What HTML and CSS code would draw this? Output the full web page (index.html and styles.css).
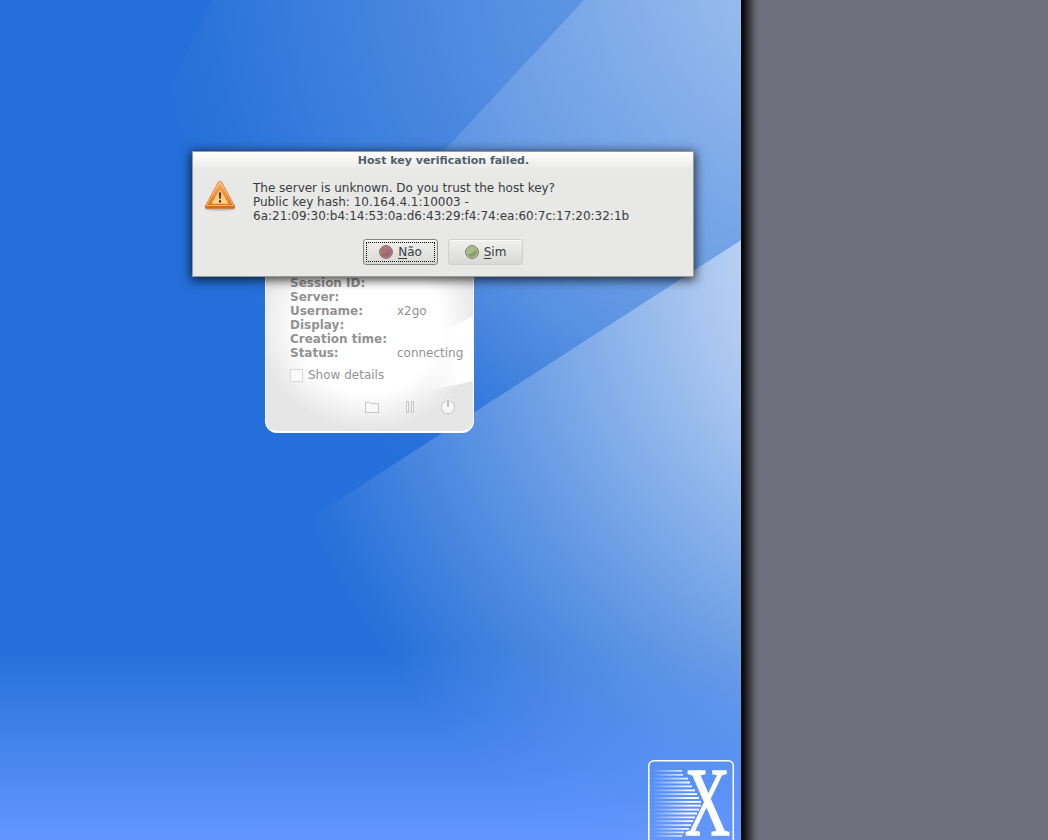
FILE: index.html
```html
<!DOCTYPE html>
<html lang="pt">
<head>
<meta charset="utf-8">
<title>X2Go Client</title>
<link rel="stylesheet" href="styles.css">
</head>
<body>
<div class="screen">
  <main class="desktop">
    <svg class="wallpaper" width="741" height="840" viewBox="0 0 741 840">
      <defs>
        <radialGradient id="beamTop" gradientUnits="userSpaceOnUse" cx="800" cy="-50" r="650">
          <stop offset="0" stop-color="#fff" stop-opacity=".38"/>
          <stop offset=".5" stop-color="#fff" stop-opacity=".21"/>
          <stop offset="1" stop-color="#fff" stop-opacity="0"/>
        </radialGradient>
        <radialGradient id="beamInner" gradientUnits="userSpaceOnUse" cx="900" cy="-50" r="640">
          <stop offset=".25" stop-color="#fff" stop-opacity=".28"/>
          <stop offset=".5" stop-color="#fff" stop-opacity=".19"/>
          <stop offset=".77" stop-color="#fff" stop-opacity=".12"/>
          <stop offset="1" stop-color="#fff" stop-opacity="0"/>
        </radialGradient>
        <radialGradient id="beamLow" gradientUnits="userSpaceOnUse" cx="960" cy="250" r="705">
          <stop offset=".31" stop-color="#fff" stop-opacity=".67"/>
          <stop offset=".55" stop-color="#fff" stop-opacity=".43"/>
          <stop offset=".7" stop-color="#fff" stop-opacity=".28"/>
          <stop offset="1" stop-color="#fff" stop-opacity="0"/>
        </radialGradient>
        <linearGradient id="floor" x1="0" y1="0" x2="0" y2="1">
          <stop offset="0" stop-color="#6497ff" stop-opacity="0"/>
          <stop offset="1" stop-color="#6497ff"/>
        </linearGradient>
        <linearGradient id="speed" gradientUnits="userSpaceOnUse" x1="652" y1="0" x2="690" y2="0">
          <stop offset="0" stop-color="#fff" stop-opacity="0"/>
          <stop offset="1" stop-color="#fff"/>
        </linearGradient>
      </defs>
      <rect width="741" height="840" fill="#246fd9"/>
      <path d="M212 0H741V240L300 525L120 195Z" fill="url(#beamTop)"/>
      <path d="M584 0H741V240L300 525L325 279Z" fill="url(#beamInner)"/>
      <path d="M741 240V840H200V589.500Z" fill="url(#beamLow)"/>
      <rect y="648" width="741" height="192" fill="url(#floor)"/>
      <rect x="648.800" y="760.800" width="84.500" height="90" rx="5" fill="none" stroke="#fff" stroke-width="1.500"/>
      <path fill="url(#speed)" d="M653 770h29v1.800h-29zM653 773.900h30v1.800h-30zM653 777.800h35v1.800h-35zM653 781.600h37v1.800h-37zM653 785.500h39v1.800h-39zM653 789.400h42v1.800h-42zM653 793.200h44v1.800h-44zM653 797.100h46v1.800h-46zM653 801h48v1.800h-48zM653 804.800h48v1.800h-48zM653 808.700h46v1.800h-46zM653 812.600h44v1.800h-44zM653 816.400h42v1.800h-42zM653 820.300h40v1.800h-40zM653 824.200h38v1.800h-38zM653 828h36v1.800h-36zM653 831.500h31v1.800h-31zM653 835h29v1.800h-29z"/>
      <text class="logo-letter" transform="translate(684.800 835.300) scale(.64 1)">X</text>
    </svg>

    <section class="session">
      <svg class="session-glow" width="207" height="231" viewBox="0 0 207 231">
        <defs>
          <radialGradient id="glow">
            <stop offset="0" stop-color="#fff"/>
            <stop offset=".65" stop-color="#fff"/>
            <stop offset="1" stop-color="#fff" stop-opacity="0"/>
          </radialGradient>
          <linearGradient id="wedge" x1="0" x2="1">
            <stop offset=".1" stop-color="#fff" stop-opacity="0"/>
            <stop offset=".75" stop-color="#fff"/>
          </linearGradient>
        </defs>
        <ellipse cx="103" cy="123" rx="112" ry="106" fill="url(#glow)"/>
        <path d="M150 144L207 115V180L150 193Z" fill="url(#wedge)"/>
      </svg>
      <dl class="facts">
        <dt>Session ID:</dt><dd></dd>
        <dt>Server:</dt><dd></dd>
        <dt>Username:</dt><dd>x2go</dd>
        <dt>Display:</dt><dd></dd>
        <dt>Creation time:</dt><dd></dd>
        <dt>Status:</dt><dd>connecting</dd>
      </dl>
      <div class="details"><span class="checkbox"></span>Show details</div>
      <div class="tools">
        <svg width="16" height="16" viewBox="0 0 16 16"><path d="M1.500 13.500V3.500h4.500l1 1h7.500v9z"/></svg>
        <svg width="16" height="16" viewBox="0 0 16 16"><path d="M4.500 2.500h2v11h-2zM9.500 2.500h2v11h-2z"/></svg>
        <svg width="16" height="16" viewBox="0 0 16 16"><circle cx="8" cy="8.300" r="6.500"/><path class="gap" d="M8 0v7.500"/><path class="hand" d="M8 1v7"/></svg>
      </div>
    </section>

    <section class="dialog">
      <h1 class="title">Host key verification failed.</h1>
      <div class="message">
        <svg width="32" height="32" viewBox="0 0 32 32">
          <defs>
            <linearGradient id="warnOuter" x1="0" y1="0" x2="0" y2="1"><stop offset="0" stop-color="#f9b878"/><stop offset=".55" stop-color="#ee8a32"/><stop offset="1" stop-color="#d9670b"/></linearGradient>
            <linearGradient id="warnInner" x1="0" y1="0" x2="0" y2="1"><stop offset="0" stop-color="#f6b068"/><stop offset="1" stop-color="#ffd890"/></linearGradient>
          </defs>
          <ellipse cx="16" cy="29" rx="15" ry="1.800" fill="#000" opacity=".18"/>
          <path d="M14.300 2.200q1.700-2.200 3.400 0L30.600 26q.7 2.500-1.600 2.500H3q-2.300 0-1.600-2.500z" fill="url(#warnOuter)" stroke="#d97828" stroke-width=".8"/>
          <path d="M14.700 3.200q1.300-1.600 2.600 0L29.300 25.500H2.700z" fill="none" stroke="#ffcf9e" stroke-width=".9" opacity=".8"/>
          <path d="M16 7.500L25 24H7Z" fill="url(#warnInner)" stroke="#e9862a" stroke-width=".8"/>
          <path d="M14.900 12.500h2.200l-.4 6.500h-1.400z" fill="#37352f"/><rect x="14.900" y="20.300" width="2.200" height="2.200" rx=".6" fill="#302f2c"/>
        </svg>
        <p class="text">The server is unknown. Do you trust the host key?<br>Public key hash: 10.164.4.1:10003 -<br>6a:21:09:30:b4:14:53:0a:d6:43:29:f4:74:ea:60:7c:17:20:32:1b</p>
      </div>
      <div class="actions">
        <button class="button focused"><svg width="14" height="14" viewBox="0 0 14 14"><circle cx="7" cy="7" r="6.400" fill="#a87376" stroke="#86676a"/><path d="M2 10Q7 9 12 4A6 6 0 0 1 2 10" fill="#9c686b"/><circle cx="7" cy="7" r="5.500" fill="none" stroke="#b98b8d" stroke-width=".6"/></svg><span><u>N</u>ão</span></button>
        <button class="button"><svg width="14" height="14" viewBox="0 0 14 14"><circle cx="7" cy="7" r="6.400" fill="#a3bc8a" stroke="#6b7862"/><path d="M2 10Q7 9 12 4A6 6 0 0 1 2 10" fill="#849c6f"/><circle cx="7" cy="7" r="5.500" fill="none" stroke="#b3c7a0" stroke-width=".6"/></svg><span><u>S</u>im</span></button>
      </div>
    </section>
  </main>
  <aside class="outside"></aside>
</div>
</body>
</html>
```
FILE: styles.css
```css
* { box-sizing: border-box; }
body { margin: 0; font: 12px/14px "DejaVu Sans", sans-serif; overflow: hidden; }
.screen { display: grid; grid-template-columns: 741px 1fr; height: 840px; }
.desktop { position: relative; overflow: hidden; }
.wallpaper { display: block; }
.logo-letter { font: 98px "Liberation Serif", serif; fill: #fff; stroke: #fff; stroke-width: 1.4px; }
.outside { background: linear-gradient(90deg, #000 0, #101012 3px, #35363d 8px, #5c5d67 13px, #6e707e 18px); }

.session {
  position: absolute; left: 265px; top: 200px; width: 209px; height: 233px;
  padding: 75px 0 0 24px;
  border: 1px solid #fff; border-bottom-width: 2px; border-radius: 12px;
  background: #e6e6e6; color: #929292; overflow: hidden;
}
.session-glow { position: absolute; left: 0; top: 0; }
.facts { position: relative; display: grid; grid-template-columns: 107px 1fr; grid-auto-rows: 14px; margin: 0; letter-spacing: -.01px; }
.facts dt { font-weight: bold; white-space: nowrap; }
.facts dd { margin: 0; }
.details { position: relative; display: flex; align-items: center; gap: 5px; margin-top: 8px; }
.checkbox { width: 13px; height: 13px; margin-top: 1px; border: 1px solid #d8d8d8; border-radius: 1px; background: #fafafa; }
.tools { position: relative; display: flex; gap: 22px; margin: 17px 0 0 74px; }
.tools svg { fill: #f8f8f8; stroke: #c4c4c4; }
.tools .gap { stroke: #f4f4f4; stroke-width: 3; }
.tools .hand { stroke: #b5b5b5; stroke-width: 1.5; }

.dialog {
  position: absolute; left: 192px; top: 151px; width: 502px; height: 126px;
  border: 1px solid #989a97;
  background: linear-gradient(#fff, #e8e8e6 18px);
  box-shadow: 0 2px 10px 1px rgba(0, 0, 0, .75);
  color: #373c3e;
}
.title { margin: 0; padding: 2px 0 0 1px; font-size: 11px; line-height: 14px; text-align: center; color: #506069; }
.message { display: flex; gap: 17px; padding: 12px 0 0 11px; height: 71px; }
.text { margin: 1px 0 0; white-space: nowrap; letter-spacing: -.008px; }
.actions { display: flex; justify-content: center; gap: 10px; }
.button {
  display: flex; align-items: center; justify-content: center; gap: 5px;
  width: 75px; height: 26px; padding: 0; border: 1px solid #cfcfcd; border-radius: 3px;
  background: linear-gradient(#f1f1f0, #d8d8d6);
  font: inherit; color: inherit;
  box-shadow: inset 0 1px #f8f8f8;
}
.focused { border-color: #858684; outline: 1px dotted #000; outline-offset: -4px; }
.button u { text-underline-offset: 2px; }
```
